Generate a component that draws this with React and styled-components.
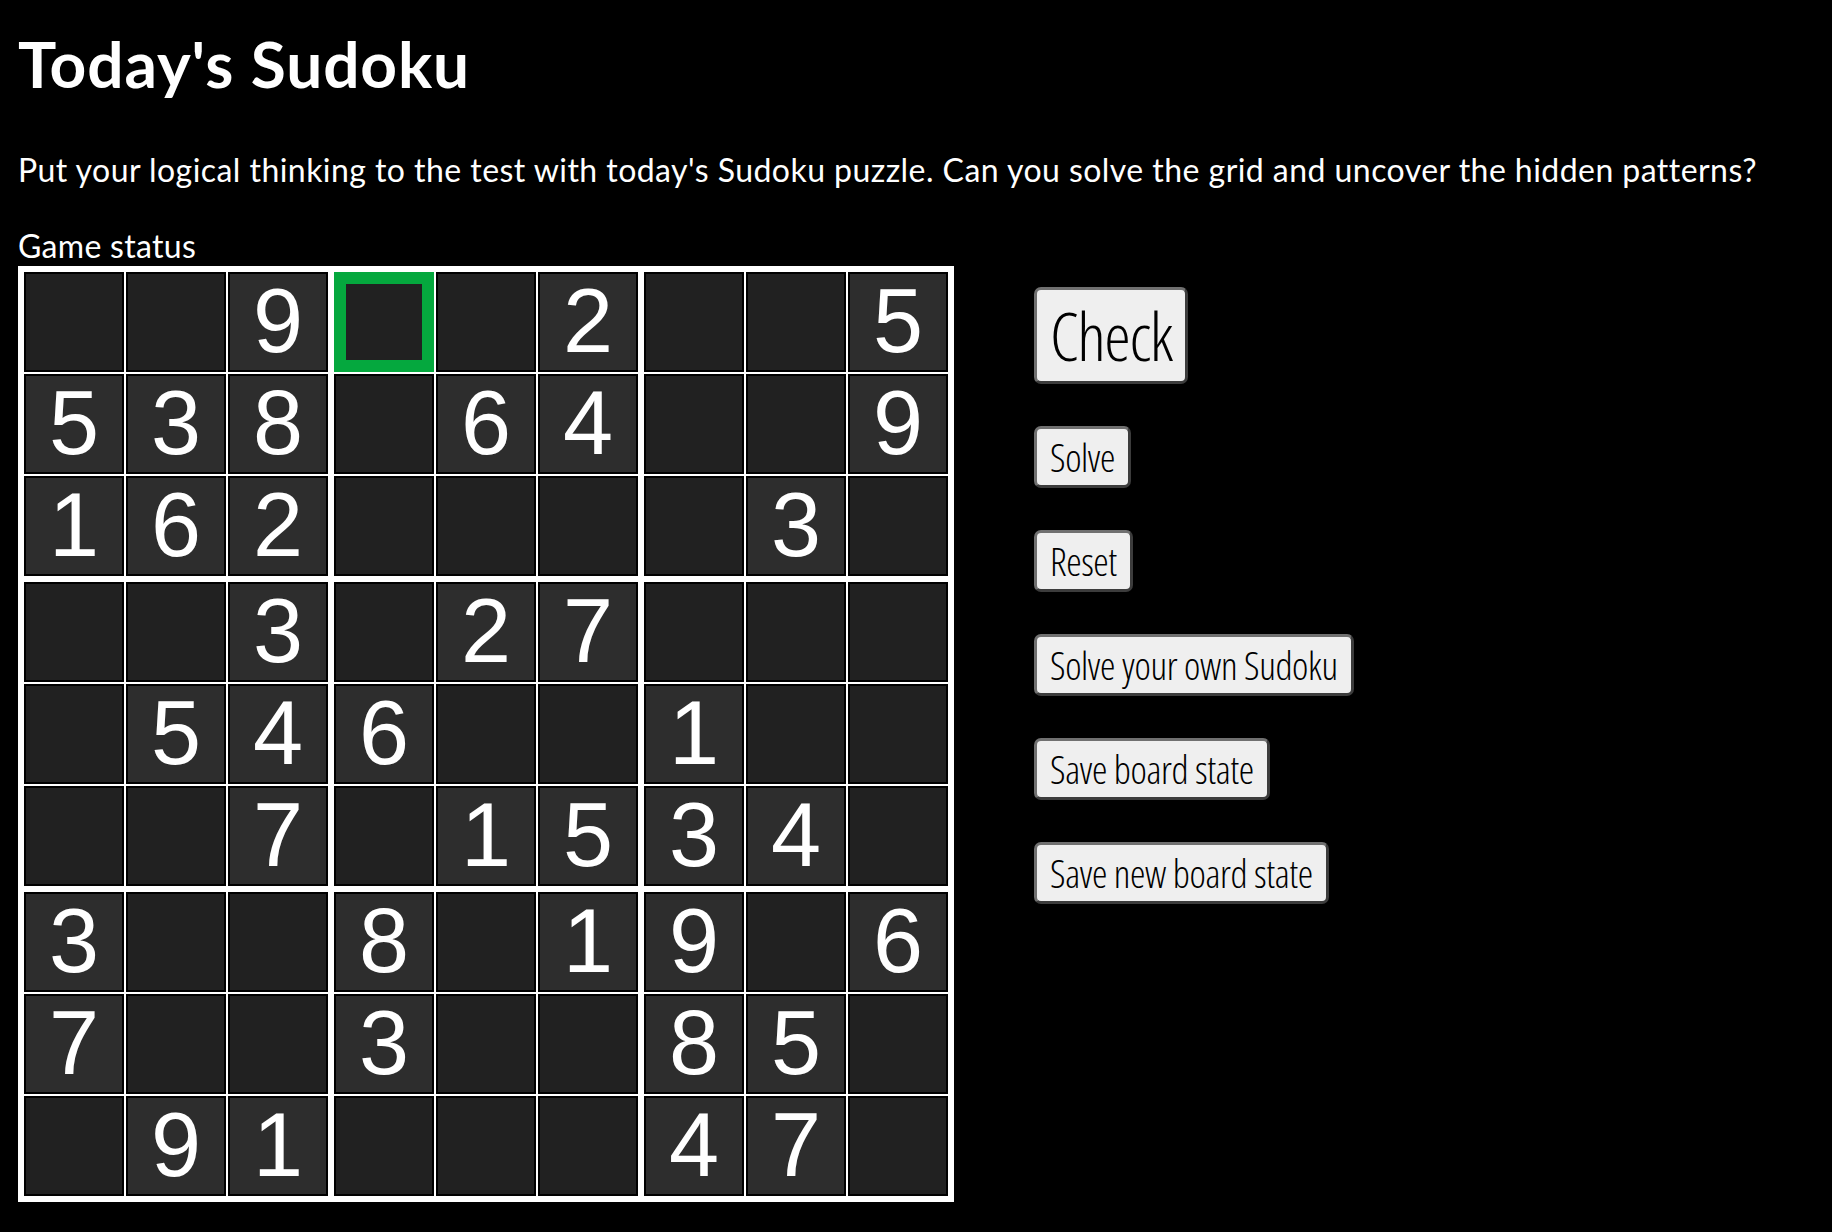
import React from "react";
import styled, { createGlobalStyle } from "styled-components";

const GlobalStyle = createGlobalStyle`
  html, body {
    margin: 0;
    padding: 0;
    background: #000;
  }
  body {
    color: #fff;
    font-family: Lato, "Open Sans", sans-serif;
  }
`;

const Page = styled.main`
  padding: 0 18px 40px;
  min-height: 1232px;
  box-sizing: border-box;
  background: #000;
`;

const Title = styled.h1`
  margin: 25px 0 0;
  font-size: 64px;
  line-height: 77px;
  font-weight: 700;
  letter-spacing: 0.9px;
`;

const Intro = styled.p`
  margin: 49px 0 0;
  font-size: 32px;
  line-height: 38px;
  letter-spacing: 0.45px;
`;

const Status = styled.div`
  margin-top: 38px;
  font-size: 32px;
  line-height: 38px;
  letter-spacing: 0.3px;
`;

const Layout = styled.div`
  margin-top: 1px;
  display: flex;
  align-items: flex-start;
  gap: 80px;
`;

const Board = styled.div`
  background: #fff;
  padding: 6px;
  display: grid;
  grid-template-columns: repeat(3, auto);
  gap: 6px;
`;

const Block = styled.div`
  display: grid;
  grid-template-columns: repeat(3, 100px);
  grid-auto-rows: 100px;
  gap: 2px;
`;

const Cell = styled.div`
  box-sizing: border-box;
  width: 100px;
  height: 100px;
  border: ${(p) => (p.$selected ? "12px solid #05a83e" : "2px solid #000")};
  background: ${(p) => (p.$given ? "#2d2d2d" : "#212121")};
  color: #fff;
  display: flex;
  align-items: center;
  justify-content: center;
  font-family: "Liberation Sans", Arial, sans-serif;
  font-size: 90px;
  line-height: 1;
  padding-bottom: 3px;
`;

const Controls = styled.div`
  display: flex;
  flex-direction: column;
  align-items: flex-start;
  gap: 42px;
  padding-top: 21px;
`;

const Button = styled.button`
  box-sizing: border-box;
  font-family: "Open Sans", sans-serif;
  font-stretch: 75%;
  font-weight: 300;
  font-size: ${(p) => (p.$big ? "67px" : "39px")};
  line-height: ${(p) => (p.$big ? "91px" : "56px")};
  height: ${(p) => (p.$big ? "97px" : "62px")};
  padding: 0 13px;
  letter-spacing: ${(p) => (p.$big ? "-1.4px" : "-0.4px")};
  color: #000;
  background: #efefef;
  border: 3px solid;
  border-color: #707070 #3c3c3c #3c3c3c #707070;
  border-radius: 7px;
  cursor: pointer;
`;

const puzzle = [
  [0, 0, 9, 0, 0, 2, 0, 0, 5],
  [5, 3, 8, 0, 6, 4, 0, 0, 9],
  [1, 6, 2, 0, 0, 0, 0, 3, 0],
  [0, 0, 3, 0, 2, 7, 0, 0, 0],
  [0, 5, 4, 6, 0, 0, 1, 0, 0],
  [0, 0, 7, 0, 1, 5, 3, 4, 0],
  [3, 0, 0, 8, 0, 1, 9, 0, 6],
  [7, 0, 0, 3, 0, 0, 8, 5, 0],
  [0, 9, 1, 0, 0, 0, 4, 7, 0],
];

const selected = [0, 3];

export default function App() {
  const blocks = [];
  for (let br = 0; br < 3; br++) {
    for (let bc = 0; bc < 3; bc++) {
      const cells = [];
      for (let r = 0; r < 3; r++) {
        for (let c = 0; c < 3; c++) {
          const row = br * 3 + r;
          const col = bc * 3 + c;
          const v = puzzle[row][col];
          cells.push(
            <Cell
              key={`${row}-${col}`}
              $given={v !== 0}
              $selected={row === selected[0] && col === selected[1]}
            >
              {v !== 0 ? v : ""}
            </Cell>
          );
        }
      }
      blocks.push(<Block key={`${br}-${bc}`}>{cells}</Block>);
    }
  }

  return (
    <>
      <GlobalStyle />
      <Page>
        <Title>Today's Sudoku</Title>
        <Intro>
          Put your logical thinking to the test with today's Sudoku puzzle. Can
          you solve the grid and uncover the hidden patterns?
        </Intro>
        <Status>Game status</Status>
        <Layout>
          <Board>{blocks}</Board>
          <Controls>
            <Button $big>Check</Button>
            <Button>Solve</Button>
            <Button>Reset</Button>
            <Button>Solve your own Sudoku</Button>
            <Button>Save board state</Button>
            <Button>Save new board state</Button>
          </Controls>
        </Layout>
      </Page>
    </>
  );
}
